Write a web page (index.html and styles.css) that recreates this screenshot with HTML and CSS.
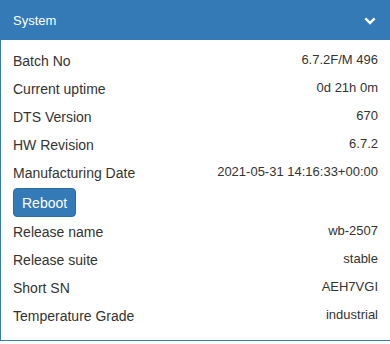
FILE: index.html
```html
<!DOCTYPE html>
<html lang="en">
<head>
    <meta charset="UTF-8">
    <meta name="viewport" content="width=device-width, initial-scale=1.0">
    <title>System</title>
    <link rel="stylesheet" href="styles.css">
</head>
<body>
    <div class="panel">
        <div class="panel-heading">
            <span class="panel-title">System</span>
            <svg class="chevron" width="12" height="8" viewBox="0 0 12 8">
                <path d="M1.4 1.4 L6 6 L10.6 1.4" fill="none" stroke="#fff" stroke-width="2.4"/>
            </svg>
        </div>

        <div class="panel-body">
            <div class="row"><span class="label">Batch No</span><span class="value">6.7.2F/M 496</span></div>
            <div class="row"><span class="label">Current uptime</span><span class="value">0d 21h 0m</span></div>
            <div class="row"><span class="label">DTS Version</span><span class="value">670</span></div>
            <div class="row"><span class="label">HW Revision</span><span class="value">6.7.2</span></div>
            <div class="row"><span class="label">Manufacturing Date</span><span class="value">2021-05-31 14:16:33+00:00</span></div>

            <button type="button" class="btn">Reboot</button>

            <div class="row"><span class="label">Release name</span><span class="value">wb-2507</span></div>
            <div class="row"><span class="label">Release suite</span><span class="value">stable</span></div>
            <div class="row"><span class="label">Short SN</span><span class="value">AEH7VGI</span></div>
            <div class="row"><span class="label">Temperature Grade</span><span class="value">industrial</span></div>
        </div>
    </div>
</body>
</html>
```

FILE: styles.css
```css
* {
    margin: 0;
    padding: 0;
    box-sizing: border-box;
    font-family: "Liberation Sans", Arial, sans-serif;
}

body {
    background-color: #fff;
    color: #333;
    width: 391px;
}

.panel {
    border: 1px solid #337ab7;
    width: 391px;
}

.panel-heading {
    background-color: #337ab7;
    color: #fff;
    height: 39px;
    padding: 0 14px 0 12px;
    display: flex;
    justify-content: space-between;
    align-items: center;
}

.panel-title {
    font-size: 13px;
    line-height: 18px;
}

.chevron {
    display: block;
    margin-top: 1px;
}

.panel-body {
    padding: 7px 12px 10px 12px;
    display: flex;
    flex-direction: column;
}

.row {
    display: flex;
    justify-content: space-between;
    align-items: flex-start;
    padding: 4px 0;
}

.label {
    font-size: 14px;
    line-height: 20px;
}

.value {
    font-size: 13px;
    line-height: 18px;
}

.btn {
    align-self: flex-start;
    background-color: #337ab7;
    color: #fff;
    border: 1px solid #2e6da4;
    border-radius: 4px;
    font-size: 14px;
    line-height: 20px;
    height: 29px;
    padding: 0 8px;
    margin: 1px 0 1px 0;
    cursor: pointer;
}
```
